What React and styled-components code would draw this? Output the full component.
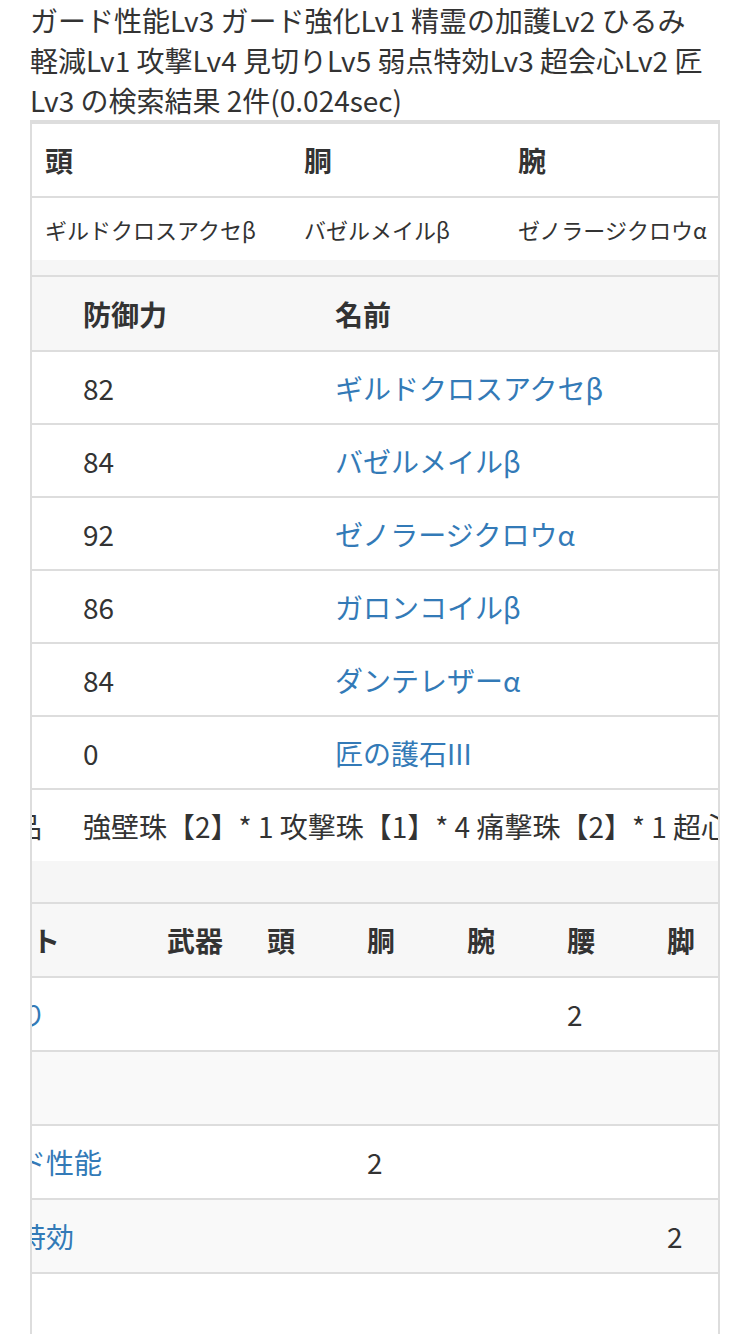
import styled, { createGlobalStyle } from "styled-components";

const GlobalStyle = createGlobalStyle`
  html, body {
    margin: 0;
    padding: 0;
    background: #fff;
  }
  body {
    font-family: "Noto Sans CJK JP", "Liberation Sans", sans-serif;
    color: #333;
  }
`;

const Title = styled.h1`
  margin: 0;
  padding: 0 30px;
  font-size: 28px;
  font-weight: 400;
  line-height: 40px;
  color: #333;
`;

const Frame = styled.div`
  margin-left: 30px;
  width: 686px;
  border: 2px solid #ddd;
  border-top-width: 4px;
  overflow: hidden;
  background: #fff;
`;

const Scroller = styled.div`
  overflow: hidden;
`;

const Table = styled.div`
  display: grid;
  grid-template-columns: ${(p) => p.$cols};
  margin-left: ${(p) => p.$shift || 0}px;
  width: ${(p) => p.$width || "auto"};
`;

const Cell = styled.div`
  display: flex;
  align-items: center;
  min-height: ${(p) => p.$h || 71}px;
  padding: 0 0 0 ${(p) => p.$pad ?? 16}px;
  background: ${(p) => p.$bg || "#fff"};
  border-bottom: ${(p) => (p.$open ? "0" : "2px solid #ddd")};
  font-size: ${(p) => p.$size || 28}px;
  font-weight: ${(p) => (p.$head ? 700 : 400)};
  text-indent: ${(p) => p.$indent || 0}px;
  white-space: nowrap;
  grid-column: ${(p) => p.$span || "auto"};
  color: #333;
`;

const Band = styled.div`
  height: ${(p) => p.$h}px;
  background: #f6f6f6;
  border-bottom: 2px solid #ddd;
`;

const Link = styled.a`
  color: #337ab7;
  text-decoration: none;
`;

const parts = [
  ["82", "ギルドクロスアクセβ"],
  ["84", "バゼルメイルβ"],
  ["92", "ゼノラージクロウα"],
  ["86", "ガロンコイルβ"],
  ["84", "ダンテレザーα"],
  ["0", "匠の護石III"],
];

const skillCols = ["武器", "頭", "胴", "腕", "腰", "脚"];

const skills = [
  { name: "見切り", pts: { 腰: 2 } },
  { name: "攻撃", pts: {} },
  { name: "ガード性能", pts: { 胴: 2 } },
  { name: "弱点特効", pts: { 脚: 2 } },
  { name: "", pts: {} },
];

export default function App() {
  return (
    <>
      <GlobalStyle />
      <Title>
        ガード性能Lv3 ガード強化Lv1 精霊の加護Lv2 ひるみ
        <br />
        軽減Lv1 攻撃Lv4 見切りLv5 弱点特効Lv3 超会心Lv2 匠
        <br />
        Lv3 の検索結果 2件(0.024sec)
      </Title>
      <Frame>
        <Table $cols="259px 214px 1fr">
          <Cell $head $pad={13} $h={72}>頭</Cell>
          <Cell $head $pad={13} $h={72}>胴</Cell>
          <Cell $head $pad={13} $h={72}>腕</Cell>
          <Cell $size={22} $pad={13} $h={62} $open>
            ギルドクロスアクセβ
          </Cell>
          <Cell $size={22} $pad={13} $h={62} $open>
            バゼルメイルβ
          </Cell>
          <Cell $size={22} $pad={13} $h={62} $open>
            ゼノラージクロウα
          </Cell>
        </Table>
        <Band $h={15} />

        <Scroller>
          <Table $cols="125px 252px 1fr" $shift={-90} $width="1200px">
            <Cell $head $bg="#f7f7f7" $h={73}>部位</Cell>
            <Cell $head $bg="#f7f7f7" $h={73}>防御力</Cell>
            <Cell $head $bg="#f7f7f7" $h={73}>名前</Cell>
            {parts.map(([def, name], i) => (
              <Row key={i} def={def} name={name} />
            ))}
            <Cell $open>装飾品</Cell>
            <Cell $span="2 / 4" $open>
              強壁珠【2】* 1 攻撃珠【1】* 4 痛撃珠【2】* 1 超心珠【2】* 1
              匠珠【3】* 1
            </Cell>
          </Table>
        </Scroller>
        <Band $h={41} />

        <Scroller>
          <Table
            $cols="205px repeat(6, 100px) 1fr"
            $shift={-86}
            $width="1200px"
          >
            <Cell $head $bg="#f7f7f7" $h={72} $indent={-14}>
              ポイント
            </Cell>
            {skillCols.map((c) => (
              <Cell key={c} $head $bg="#f7f7f7" $h={72}>
                {c}
              </Cell>
            ))}
            <Cell $head $bg="#f7f7f7" $h={72}>護石</Cell>
            {skills.map((s, i) => {
              const bg = i % 2 === 1 ? "#f9f9f9" : "#fff";
              return (
                <SkillRow key={i} skill={s} bg={bg} last={i === skills.length - 1} />
              );
            })}
          </Table>
        </Scroller>
      </Frame>
    </>
  );
}

function Row({ def, name }) {
  return (
    <>
      <Cell />
      <Cell>{def}</Cell>
      <Cell>
        <Link href="#">{name}</Link>
      </Cell>
    </>
  );
}

function SkillRow({ skill, bg, last }) {
  const h = last ? 90 : 72;
  return (
    <>
      <Cell $bg={bg} $h={h}>
        <Link href="#">{skill.name}</Link>
      </Cell>
      {skillCols.map((c) => (
        <Cell key={c} $bg={bg} $h={h}>
          {skill.pts[c] || ""}
        </Cell>
      ))}
      <Cell $bg={bg} $h={h} />
    </>
  );
}
